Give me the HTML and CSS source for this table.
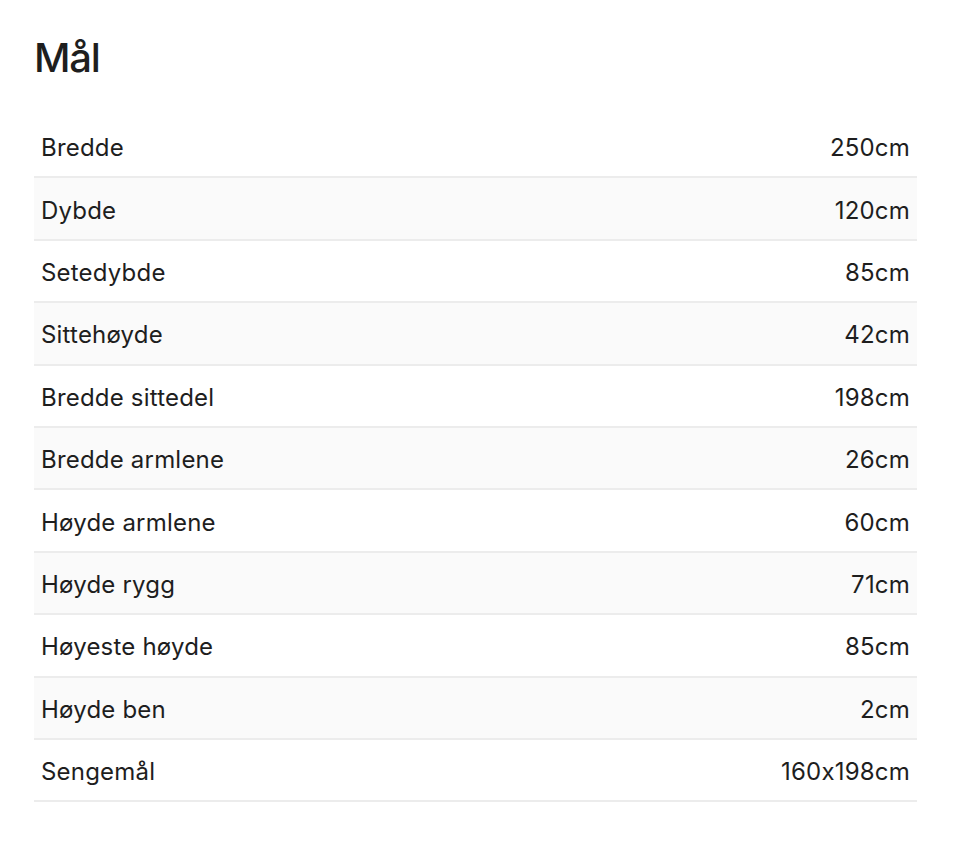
FILE: index.html
```html
<!DOCTYPE html>
<html lang="no">
<head>
    <meta charset="UTF-8">
    <meta name="viewport" content="width=device-width, initial-scale=1.0">
    <title>Mål</title>
    <link rel="stylesheet" href="styles.css">
</head>
<body>
    <div class="specs">
        <h2>Mål</h2>
        <table class="spec-table">
            <tr><td>Bredde</td><td>250cm</td></tr>
            <tr><td>Dybde</td><td>120cm</td></tr>
            <tr><td>Setedybde</td><td>85cm</td></tr>
            <tr><td>Sittehøyde</td><td>42cm</td></tr>
            <tr><td>Bredde sittedel</td><td>198cm</td></tr>
            <tr><td>Bredde armlene</td><td>26cm</td></tr>
            <tr><td>Høyde armlene</td><td>60cm</td></tr>
            <tr><td>Høyde rygg</td><td>71cm</td></tr>
            <tr><td>Høyeste høyde</td><td>85cm</td></tr>
            <tr><td>Høyde ben</td><td>2cm</td></tr>
            <tr><td>Sengemål</td><td>160x198cm</td></tr>
        </table>
    </div>
</body>
</html>
```

FILE: styles.css
```css
* {
    margin: 0;
    padding: 0;
    box-sizing: border-box;
}

body {
    font-family: Inter, "Liberation Sans", sans-serif;
    font-feature-settings: "calt" 0;
    background-color: #fff;
    color: #1e1e1e;
}

.specs {
    padding: 34px 43px 0 34px;
}

.specs h2 {
    font-size: 40px;
    font-weight: 500;
    letter-spacing: -1.2px;
    line-height: 48px;
    margin-bottom: 33px;
}

.spec-table {
    width: 100%;
    border-collapse: collapse;
}

.spec-table td {
    height: 62.4px;
    padding: 3px 7px 0;
    font-size: 24px;
    letter-spacing: 0.2px;
    border-bottom: 2px solid #ececec;
}

.spec-table td:last-child {
    text-align: right;
}

.spec-table tr:nth-child(even) {
    background-color: #fafafa;
}
```
